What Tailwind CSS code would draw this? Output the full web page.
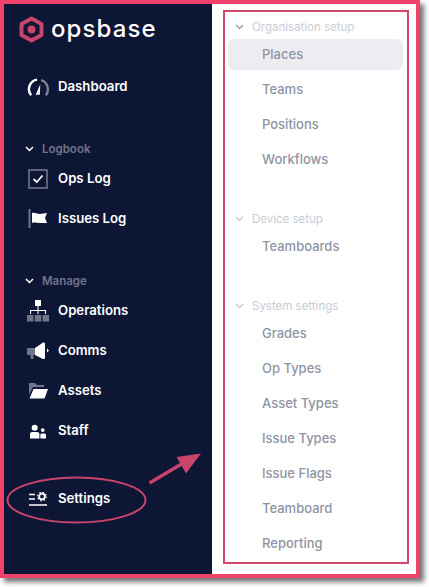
<!DOCTYPE html>
<html lang="en">
<head>
    <meta charset="UTF-8">
    <title>Opsbase settings menu</title>
    <script src="https://cdn.jsdelivr.net/npm/@tailwindcss/browser@4"></script>
</head>
<body class="bg-white font-['Inter','Liberation_Sans',sans-serif]">
    <div class="relative w-[429px] h-[587px] overflow-hidden">
        <div class="flex w-[420px] h-[578px] border-4 border-[#f0426a] shadow-[4px_4px_5px_rgba(0,0,0,0.55)]">

            <!-- sidebar -->
            <aside class="w-[208px] shrink-0 bg-[#0d1635] text-white">
                <div class="flex items-center h-[27px] mt-[12px] ml-[15px] gap-[7px]">
                    <svg width="25" height="27" viewBox="0 0 25 27"><path d="M12.5 2.5 L22.500 8 V19 L12.500 24.500 L2.500 19 V8 Z" fill="none" stroke="#c9446a" stroke-width="4" stroke-linejoin="round"/><circle cx="12.5" cy="13.5" r="4" fill="#c9446a"/></svg>
                    <span class="text-[24px] leading-none font-medium tracking-[1.1px] -mt-[1px]">opsbase</span>
                </div>

                <nav class="mt-[24px] text-[13.2px] font-semibold">
                    <div class="flex items-center h-[40px]">
                        <span class="w-[54px] flex justify-end pr-[9px]">
                            <svg width="22" height="22" viewBox="0 0 24 22"><path d="M4.500 20 A10.500 10.500 0 0 1 11 3" fill="none" stroke="#fff" stroke-width="2.6"/><path d="M15.500 3.500 A10.500 10.500 0 0 1 20.500 20" fill="none" stroke="#7d8296" stroke-width="2.6"/><path d="M14.500 8 L14 19.500 H9.500 Z" fill="#fff"/></svg>
                        </span>
                        <span>Dashboard</span>
                    </div>

                    <div class="flex items-center h-[18px] mt-[33px] mb-[1px] text-[11.500px] text-[#6f7488]">
                        <svg class="ml-[21px] mr-[8px]" width="9" height="6" viewBox="0 0 9 6"><path d="M1 1 L4.500 4.500 L8 1" fill="none" stroke="#fff" stroke-width="1.5"/></svg>
                        <span class="pt-[2px]">Logbook</span>
                    </div>
                    <div class="flex items-center h-[40px]">
                        <span class="w-[54px] flex justify-end pr-[10px]">
                            <svg width="20" height="20" viewBox="0 0 20 20"><rect x="1" y="1" width="18" height="18" fill="none" stroke="#70758a" stroke-width="1.6"/><path d="M5.500 10 L8.800 13 L14.500 6.500" fill="none" stroke="#fff" stroke-width="1.7"/></svg>
                        </span>
                        <span>Ops Log</span>
                    </div>
                    <div class="flex items-center h-[40px]">
                        <span class="w-[54px] flex justify-end pr-[10px]">
                            <svg width="20" height="20" viewBox="0 0 20 20"><rect x="0.5" y="0" width="2" height="19" fill="#70758a"/><path d="M4 4 C7 3 9 5 12 5 L19 4 L17 9 L19 14 L12 14 C9 14 7 13 4 14 Z" fill="#fff"/></svg>
                        </span>
                        <span>Issues Log</span>
                    </div>

                    <div class="flex items-center h-[18px] mt-[33px] mb-[1px] text-[11.500px] text-[#6f7488]">
                        <svg class="ml-[21px] mr-[8px]" width="9" height="6" viewBox="0 0 9 6"><path d="M1 1 L4.500 4.500 L8 1" fill="none" stroke="#fff" stroke-width="1.5"/></svg>
                        <span class="pt-[2px]">Manage</span>
                    </div>
                    <div class="flex items-center h-[40px]">
                        <span class="w-[54px] flex justify-end pr-[9px]">
                            <svg width="22" height="22" viewBox="0 0 22 22"><rect x="8" y="0" width="6" height="6" fill="#fff"/><path d="M11 6 V14 M3.500 14 V10.500 H18.500 V14" fill="none" stroke="#fff" stroke-width="1.1"/><g fill="#70758a"><rect x="0" y="15" width="6.500" height="6.500"/><rect x="7.750" y="15" width="6.500" height="6.500"/><rect x="15.500" y="15" width="6.500" height="6.500"/></g></svg>
                        </span>
                        <span>Operations</span>
                    </div>
                    <div class="flex items-center h-[40px]">
                        <span class="w-[54px] flex justify-end pr-[9px]">
                            <svg width="22" height="18" viewBox="0 0 22 18"><path d="M1 6 H8 V13 H6.500 V17 H3.500 V13 H1 Q0 13 0 12 V7 Q0 6 1 6 Z" fill="#70758a"/><path d="M8 6 L16 0.500 Q18 0 18 2 V15.500 Q18 17.500 16 17 L8 13 Z" fill="#fff"/><path d="M20 6.500 L22 8.500 L20 10.500 Z" fill="#fff"/></svg>
                        </span>
                        <span>Comms</span>
                    </div>
                    <div class="flex items-center h-[40px]">
                        <span class="w-[54px] flex justify-end pr-[10px]">
                            <svg width="19" height="16" viewBox="0 0 19 16"><path d="M0 0 H6 L8 2 H15 V4 H4 L0 12 Z" fill="#70758a"/><path d="M4.500 6 H19 L15.500 15.500 H0.500 Z" fill="#fff"/></svg>
                        </span>
                        <span>Assets</span>
                    </div>
                    <div class="flex items-center h-[40px]">
                        <span class="w-[54px] flex justify-end pr-[12px]">
                            <svg width="16" height="15" viewBox="0 0 17 15"><circle cx="5" cy="3.500" r="3.200" fill="#fff"/><path d="M0 15 V10 Q0 8 2.500 8 H7.500 Q10 8 10 10 V15 Z" fill="#fff"/><circle cx="13.500" cy="6" r="2" fill="#fff"/><path d="M11 15 V11 Q11 9.500 13 9.500 H15 Q17 9.500 17 11 V15 Z" fill="#fff"/></svg>
                        </span>
                        <span>Staff</span>
                    </div>
                    <div class="flex items-center h-[40px] mt-[28px]">
                        <span class="w-[54px] flex justify-end pr-[11px]">
                            <svg width="18" height="14" viewBox="0 0 18 14"><path d="M0 2.500 H6 M0 7 H6 M0 13 H18" fill="none" stroke="#fff" stroke-width="1.4"/><circle cx="13" cy="4.500" r="2.800" fill="none" stroke="#fff" stroke-width="1.800"/><circle cx="13" cy="4.500" r="4.200" fill="none" stroke="#fff" stroke-width="1.300" stroke-dasharray="1.600 1.700"/></svg>
                        </span>
                        <span>Settings</span>
                    </div>
                </nav>
            </aside>

            <!-- settings menu -->
            <main class="flex-1 pl-[16px] pr-[13px] text-[13px] font-medium text-[#8f94a3]">
                <div class="flex items-center h-[18px] mt-[14px] text-[11.500px] font-normal text-[#c9ccd4]">
                    <svg class="ml-[7px] mr-[8px]" width="9" height="6" viewBox="0 0 9 6"><path d="M1 1 L4.500 4.500 L8 1" fill="none" stroke="#9a9eac" stroke-width="1.5"/></svg>
                    <span class="pt-[2px]">Organisation setup</span>
                </div>
                <div class="flex items-center h-[31px] mt-[3px] pl-[34px] rounded-[6px] bg-[#ececf1]">Places</div>
                <div class="flex items-center h-[35px] mt-[2px] pl-[34px]">Teams</div>
                <div class="flex items-center h-[35px] pl-[34px]">Positions</div>
                <div class="flex items-center h-[35px] pl-[34px]">Workflows</div>

                <div class="flex items-center h-[18px] mt-[33px] text-[11.500px] font-normal text-[#c9ccd4]">
                    <svg class="ml-[7px] mr-[8px]" width="9" height="6" viewBox="0 0 9 6"><path d="M1 1 L4.500 4.500 L8 1" fill="none" stroke="#c9ccd4" stroke-width="1.5"/></svg>
                    <span class="pt-[2px]">Device setup</span>
                </div>
                <div class="flex items-center h-[35px] mt-[1px] pl-[34px]">Teamboards</div>

                <div class="flex items-center h-[18px] mt-[33px] text-[11.500px] font-normal text-[#c9ccd4]">
                    <svg class="ml-[7px] mr-[8px]" width="9" height="6" viewBox="0 0 9 6"><path d="M1 1 L4.500 4.500 L8 1" fill="none" stroke="#c9ccd4" stroke-width="1.5"/></svg>
                    <span class="pt-[2px]">System settings</span>
                </div>
                <div class="flex items-center h-[35px] mt-[1px] pl-[34px]">Grades</div>
                <div class="flex items-center h-[35px] pl-[34px]">Op Types</div>
                <div class="flex items-center h-[35px] pl-[34px]">Asset Types</div>
                <div class="flex items-center h-[35px] pl-[34px]">Issue Types</div>
                <div class="flex items-center h-[35px] pl-[34px]">Issue Flags</div>
                <div class="flex items-center h-[35px] pl-[34px]">Teamboard</div>
                <div class="flex items-center h-[35px] pl-[34px]">Reporting</div>
            </main>
        </div>

        <!-- annotations drawn over the screenshot -->
        <div class="absolute left-[223px] top-[10px] w-[186px] h-[554px] border-2 border-[#d3476b]"></div>
        <svg class="absolute left-0 top-0" width="429" height="587" viewBox="0 0 429 587">
            <ellipse cx="76.500" cy="500" rx="69" ry="22.500" fill="none" stroke="#c9446a" stroke-width="2"/>
            <path d="M149.500 483 L184 462.500" stroke="#c9446a" stroke-width="3.500"/>
            <path d="M201 453.500 L176.500 457 L186 473.500 Z" fill="#c9446a"/>
        </svg>
    </div>
</body>
</html>
